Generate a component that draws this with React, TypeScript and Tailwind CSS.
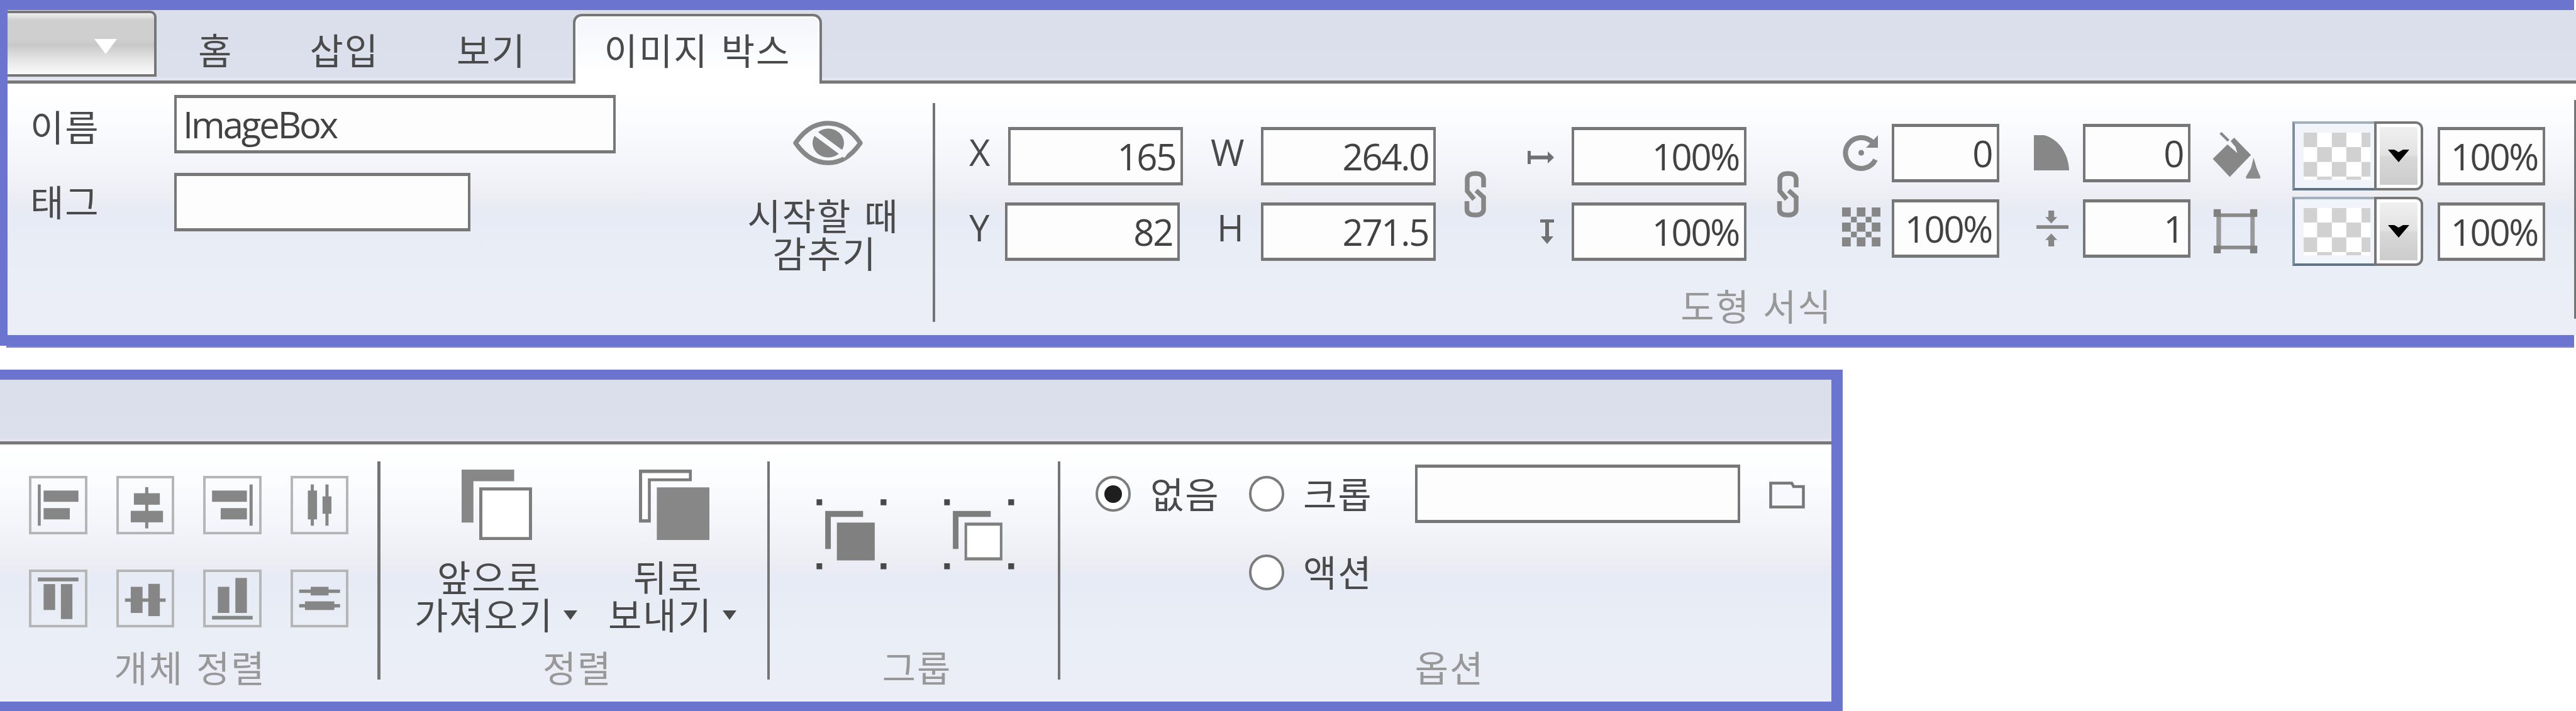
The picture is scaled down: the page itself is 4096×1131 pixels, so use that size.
import type { ReactNode } from "react";

const KR = "font-['Noto_Sans_CJK_KR',sans-serif] text-[58px] leading-[60px] tracking-[2px] [word-spacing:5px] whitespace-nowrap";
const LATIN = "font-['Open_Sans',sans-serif] text-[58px] leading-[60px] whitespace-nowrap";

function Label({ children, className = "" }: { children: ReactNode; className?: string }) {
  return <div className={`${KR} text-[#4a4a4a] ${className}`}>{children}</div>;
}

function Caption({ children, className = "" }: { children: ReactNode; className?: string }) {
  return <div className={`${KR} text-center text-[#989898] ${className}`}>{children}</div>;
}

function Field({ value, className = "", align = "justify-end pr-[8px] tracking-[-2.3px]" }: { value?: string; className?: string; align?: string }) {
  return (
    <div
      className={`flex h-[93px] shrink-0 items-center border-x-4 border-y-[5px] border-[#777] bg-[#fdfdfd] ${align} ${className}`}
    >
      <span className={`${LATIN} text-[#424242]`}>{value}</span>
    </div>
  );
}

function Divider({ className = "" }: { className?: string }) {
  return <div className={`w-1 shrink-0 bg-[#747474] ${className}`} />;
}

type R = [number, number, number, number];

function Glyph({ box, rects, className = "" }: { box: R; rects: R[]; className?: string }) {
  return (
    <svg viewBox={box.join(" ")} preserveAspectRatio="none" className={`block ${className}`}>
      {rects.map(([x1, y1, x2, y2], i) => (
        <rect key={i} x={x1} y={y1} width={x2 - x1} height={y2 - y1} fill="#868686" />
      ))}
    </svg>
  );
}

const alignIcons: { box: R; rects: R[] }[] = [
  { box: [110, 527, 222, 258], rects: [[144, 565, 155, 748], [166, 592, 299, 642], [166, 670, 266, 720]] },
  { box: [442, 527, 222, 258], rects: [[552, 577, 564, 760], [509, 604, 608, 655], [497, 682, 620, 733]] },
  { box: [773, 527, 222, 258], rects: [[807, 592, 940, 642], [840, 670, 940, 720], [950, 565, 962, 748]] },
  { box: [1105, 527, 222, 258], rects: [[1182, 565, 1194, 748], [1171, 592, 1206, 720], [1238, 565, 1250, 748], [1227, 618, 1261, 695]] },
  { box: [110, 940, 222, 256], rects: [[144, 975, 299, 992], [166, 1004, 210, 1118], [232, 1004, 276, 1158]] },
  { box: [442, 940, 222, 256], rects: [[475, 1067, 630, 1082], [497, 1016, 542, 1131], [564, 1003, 608, 1145]] },
  { box: [773, 940, 222, 256], rects: [[829, 1016, 873, 1131], [896, 977, 940, 1131], [807, 1144, 962, 1160]] },
  { box: [1105, 940, 222, 256], rects: [[1138, 1028, 1294, 1043], [1182, 1016, 1250, 1054], [1138, 1092, 1294, 1107], [1160, 1080, 1272, 1118]] },
];

function EyeIcon() {
  return (
    <svg viewBox="0 0 111 71" className="ml-[82px] mt-[59px] block h-[71px] w-[111px]" fill="none">
      <path d="M4 35.5C20 12 38 4 55.5 4S91 12 107 35.5C91 59 73 67 55.5 67S20 59 4 35.5Z" stroke="#878787" strokeWidth="7.5" strokeLinejoin="round" fill="#f7f8fb" />
      <ellipse cx="56" cy="35.5" rx="25" ry="23" fill="#878787" />
      <path d="M30 16 84 56" stroke="#f7f8fb" strokeWidth="8" />
    </svg>
  );
}

function LinkIcon({ className = "" }: { className?: string }) {
  return (
    <svg viewBox="0 0 35 74" className={`mt-[139px] block h-[74px] w-[35px] shrink-0 ${className}`} fill="none" stroke="#868686" strokeWidth="7.5">
      <path d="M31 26V13C31 7 26 4 18 4S5 7 5 13V32L16 45" />
      <path d="M4.5 48V61C4.5 67 9 70 17.5 70S31 67 31 61V42L19 31" />
    </svg>
  );
}

function RotateIcon() {
  return (
    <svg viewBox="0 0 56 56" className="mt-[82px] block h-14 w-14 overflow-visible" fill="none">
      <path d="M53 39A25 24.5 0 1 1 48 11" stroke="#878787" strokeWidth="8" />
      <path d="M57 0V20H38Z" fill="#878787" />
      <circle cx="30.5" cy="28" r="4.5" fill="#878787" />
    </svg>
  );
}

const opacityRects: R[] = [
  ...[127, 183, 240].flatMap((x) => [715, 801, 885].map((y): R => [x, y, x + 33, y + 52])),
  ...[161, 217].flatMap((x) => [768, 853].map((y): R => [x, y, x + 22, y + 32])),
];

const swatchRects: R[] = [
  [503, 583, 555, 646], [612, 583, 668, 646], [727, 583, 761, 646],
  [555, 646, 612, 711], [668, 646, 725, 711],
  [503, 711, 555, 775], [612, 711, 668, 775], [727, 711, 761, 775],
  [555, 775, 612, 789], [668, 775, 725, 789],
];

function Swatch({ className = "" }: { className?: string }) {
  return (
    <div className={`flex h-[110px] w-[208px] ${className}`}>
      <div className="w-[130px] border-b-4 border-l-4 border-t-4 border-b-[#5f7487] border-l-[#7c8fa0] border-t-[#a3afbb] bg-[#f1f4fa] pl-[14px] pt-[14px]">
        <svg viewBox="503 583 258 206" preserveAspectRatio="none" className="block h-[75px] w-[106px] bg-white">
          {swatchRects.map(([x1, y1, x2, y2], i) => (
            <rect key={i} x={x1} y={y1} width={x2 - x1} height={y2 - y1} fill="#d1d1d1" />
          ))}
        </svg>
      </div>
      <div className="flex w-[78px] rounded-r-[12px] border-4 border-[#777] bg-white p-[5px]">
        <div className="flex flex-1 items-center justify-center bg-[linear-gradient(#f0f0f0,#e2e2e2_48%,#d8d8d8_52%,#cccccc)]">
          <svg viewBox="833 657 82 56" preserveAspectRatio="none" className="h-5 w-[34px]">
            <path d="M833 657H857L874 668 891 657H915L874 713Z" fill="#000" />
          </svg>
        </div>
      </div>
    </div>
  );
}

function Radio({ checked = false, className = "" }: { checked?: boolean; className?: string }) {
  return (
    <div className={`flex h-[57px] w-14 shrink-0 items-center justify-center rounded-full border-[4px] border-[#7c7c7c] bg-white ${className}`}>
      {checked && <div className="h-[28px] w-[28px] rounded-full bg-[#1e1e1e]" />}
    </div>
  );
}

function Caret() {
  return (
    <svg viewBox="0 0 22 15" className="ml-[16px] mt-1 h-[15px] w-[22px]">
      <path d="M0 0H22L11 15Z" fill="#4a4a4a" />
    </svg>
  );
}

const bodyBg = "bg-[linear-gradient(#ffffff,#fcfdfe_12%,#f4f5fa_31%,#eeeff5_43%,#eaecf3_48%,#e7ebf5_52%,#e9edf6_70%,#ebeef6)]";
const stripBg = "bg-[linear-gradient(#dadeea,#dbdfeb_12%,#dce0ec_94%,#e6e9f5)]";

function TopPanel() {
  return (
    <section className="h-[553px] w-[4096px]">
      <div className="h-4 w-[4093px] bg-[#6b74ce]" />
      <div className="flex h-[517px]">
        <div className="w-3 shrink-0 bg-[#6b74ce]" />
        <div className="w-[4084px]">
          <div className={`flex h-[117px] border-b-[5px] border-[#797979] ${stripBg}`}>
            <div className="mt-px flex h-[105px] w-[237px] shrink-0 rounded-tr-[10px] border-b-4 border-r-4 border-t-4 border-[#777] bg-[linear-gradient(#eeeeee,#cfcfcf_12%,#cfcfcf_42%,#c8c8c8_52%,#e4e4e4_75%,#fafafa)]">
              <svg viewBox="0 0 36 24" className="ml-[138px] mt-[41px] h-6 w-9">
                <path d="M0 0H36L18 24Z" fill="#fff" />
              </svg>
            </div>
            <Label className="ml-[66px] mt-[32px]">홈</Label>
            <Label className="ml-[122px] mt-[32px]">삽입</Label>
            <Label className="ml-[123px] mt-[32px]">보기</Label>
            <div className="relative ml-auto mr-[2789px] mt-[6px] flex h-[111px] w-[396px] shrink-0 justify-center rounded-t-[14px] border-x-4 border-t-[4px] border-[#777] bg-[linear-gradient(#f3f5fb,#ffffff_85%)] shadow-[inset_0_0_0_3px_white]">
              <Label className="mt-[22px]">이미지 박스</Label>
            </div>
          </div>
          <div className={`flex h-[400px] ${bodyBg}`}>
            <div className="w-[967px] shrink-0 pt-[18px]">
              <div className="flex items-center">
                <Label className="w-[265px] pl-[36px] pt-1">이름</Label>
                <Field value="ImageBox" className="w-[702px]" align="pl-[10px] tracking-[-3.1px]" />
              </div>
              <div className="mt-[31px] flex items-center">
                <Label className="w-[265px] pb-[5px] pl-[36px]">태그</Label>
                <Field className="w-[471px]" />
              </div>
            </div>
            <div className="ml-[200px] w-[260px] shrink-0">
              <EyeIcon />
              <Label className="mt-[48px] text-center">시작할 때</Label>
              <Label className="pl-[5px] text-center">감추기</Label>
            </div>
            <Divider className="ml-[44px] mt-[31px] h-[348px]" />
            <div className="w-[2606px] shrink-0">
              <div className="flex h-[300px]">
                <div className="ml-[54px] w-[57px] shrink-0 pt-[79px]">
                  <div className={`${LATIN} text-[#4a4a4a]`}>X</div>
                  <div className={`${LATIN} mt-[60px] text-[#4a4a4a]`}>Y</div>
                </div>
                <div className="w-[283px] shrink-0 pt-[69px]">
                  <Field value="165" className="ml-[5px] w-[278px]" />
                  <Field value="82" className="mt-[27px] w-[278px]" />
                </div>
                <div className="w-[124px] shrink-0 pt-[79px]">
                  <div className={`${LATIN} pl-[44px] text-[#4a4a4a]`}>W</div>
                  <div className={`${LATIN} mt-[60px] pl-[54px] text-[#4a4a4a]`}>H</div>
                </div>
                <div className="w-[278px] shrink-0 pt-[69px]">
                  <Field value="264.0" />
                  <Field value="271.5" className="mt-[27px]" />
                </div>
                <LinkIcon className="ml-[45px]" />
                <div className="ml-[66px] w-[42px] shrink-0 pt-[107px]">
                  <svg viewBox="0 0 42 21" className="block h-[21px] w-[42px]">
                    <path d="M0 0H5V7.500H32V1L42 10.500 32 20V13.500H5V21H0Z" fill="#707070" />
                  </svg>
                  <svg viewBox="0 0 22 39" className="ml-[20px] mt-[88px] block h-[39px] w-[22px]">
                    <path d="M0 0H22V5H14V27H21L11 39 1 27H8V5H0Z" fill="#707070" />
                  </svg>
                </div>
                <div className="ml-[28px] w-[278px] shrink-0 pt-[69px]">
                  <Field value="100%" />
                  <Field value="100%" className="mt-[27px]" />
                </div>
                <LinkIcon className="ml-[48px]" />
                <div className="ml-[69px] w-[61px] shrink-0">
                  <RotateIcon />
                  <Glyph box={[127, 715, 146, 222]} rects={opacityRects} className="mt-[59px] h-[62px] w-[61px]" />
                </div>
                <div className="ml-[18px] w-[171px] shrink-0 pt-[64px]">
                  <Field value="0" />
                  <Field value="100%" className="mt-[27px]" />
                </div>
                <div className="ml-[55px] w-[56px] shrink-0 pt-[82px]">
                  <svg viewBox="0 0 56 56" className="block h-14 w-14">
                    <path d="M0 0H16C40 6 55 30 56 56H0Z" fill="#878787" />
                  </svg>
                  <svg viewBox="867 733 123 204" preserveAspectRatio="none" className="ml-1 mt-16 block h-[57px] w-[51px]">
                    <path d="M867 816H990V837H867ZM913 733H935V770H947L924 806 901 770H913ZM913 937H935V900H947L924 864 901 900H913Z" fill="#868686" />
                  </svg>
                </div>
                <div className="ml-[22px] w-[171px] shrink-0 pt-[64px]">
                  <Field value="0" />
                  <Field value="1" className="mt-[27px]" />
                </div>
                <div className="ml-[35px] w-[76px] shrink-0 pt-[77px]">
                  <svg viewBox="148 580 185 203" preserveAspectRatio="none" className="block h-[74px] w-[76px]">
                    <path d="M149 697 206 634 244 672 237 645 218 620 232 605 297 680 215 776Z" fill="#878787" />
                    <path d="M179 584 210 618" stroke="#878787" strokeWidth="11" />
                    <path d="M307 692 319 738 333 774V783H278V774L297 738Z" fill="#8c8c8c" />
                  </svg>
                  <svg viewBox="150 917 175 200" preserveAspectRatio="none" className="ml-px mt-[48px] block h-[72px] w-[71px]">
                    <path d="M163 940H181V1095H163ZM296 940H313V1095H296Z" fill="#999" />
                    <path d="M163 938H313V954H163ZM163 1080H313V1096H163Z" fill="#8a8a8a" />
                    <path d="M152 919H180V953H152ZM295 919H323V953H295ZM152 1080H180V1114H152ZM295 1080H323V1114H295Z" fill="#808080" />
                  </svg>
                </div>
                <div className="ml-[51px] w-[208px] shrink-0 pt-[60px]">
                  <Swatch />
                  <Swatch className="mt-[10px]" />
                </div>
                <div className="ml-[23px] w-[171px] shrink-0 pt-[69px]">
                  <Field value="100%" />
                  <Field value="100%" className="mt-[27px]" />
                </div>
              </div>
              <Caption className="mt-[22px] pl-[6px]">도형 서식</Caption>
            </div>
            <Divider className="mt-[26px] h-[348px]" />
          </div>
        </div>
      </div>
      <div className="h-[17px] w-[4093px] bg-[#6b74ce]" />
      <div className="ml-[10px] h-[3px] w-[4083px] bg-[#757edd]" />
    </section>
  );
}

function BottomPanel() {
  return (
    <section className="mt-[35px] h-[543px] w-[2930px] border-b-[15px] border-r-[18px] border-t-[16px] border-[#6b74ce]">
      <div className={`h-[103px] border-b-[5px] border-[#797979] ${stripBg}`} />
      <div className={`flex h-[409px] ${bodyBg}`}>
        <div className="w-[600px] shrink-0">
          <div className="h-[323px] pl-[46px] pt-[50px]">
            <div className="grid w-max grid-cols-4 gap-x-[46px] gap-y-[56px]">
              {alignIcons.map((icon, i) => (
                <div key={i} className="relative h-[92.5px] w-[92.5px]">
                  <Glyph {...icon} className="h-full w-full" />
                  <div className="absolute inset-0 border-[4.5px] border-[#b6b6b6]" />
                </div>
              ))}
            </div>
          </div>
          <Caption className="pl-[4px]">개체 정렬</Caption>
        </div>
        <Divider className="mt-[27px] h-[347px] w-[5px]" />
        <div className="w-[615px] shrink-0">
          <div className="flex h-[323px] pt-[40px]">
            <div className="ml-[54px] w-[260px] shrink-0">
              <svg viewBox="275 500 268 310" preserveAspectRatio="none" className="ml-[75px] block h-[112px] w-[112px]">
                <path d="M275 500H475V551H320V733H275Z" fill="#878787" />
                <path d="M342 578H543V810H342Z" fill="#7d7d7d" />
                <path d="M354 592H531V797H354Z" fill="#fff" />
              </svg>
              <Label className="ml-[36px] mt-[27px]">앞으로</Label>
              <div className="flex items-center">
                <Label>가져오기</Label>
                <Caret />
              </div>
            </div>
            <div className="ml-[48px] w-[220px] shrink-0">
              <svg viewBox="950 500 268 310" preserveAspectRatio="none" className="ml-[49px] block h-[112px] w-[112px]">
                <path d="M950 500H1151V551H995V733H950Z" fill="#7d7d7d" />
                <path d="M962 515H1140V539H984V719H962Z" fill="#fff" />
                <path d="M1018 578H1218V810H1018Z" fill="#878787" />
              </svg>
              <Label className="ml-[40px] mt-[27px]">뒤로</Label>
              <div className="flex items-center">
                <Label>보내기</Label>
                <Caret />
              </div>
            </div>
          </div>
          <Caption className="pl-[11px]">정렬</Caption>
        </div>
        <Divider className="mt-[27px] h-[347px]" />
        <div className="w-[458px] shrink-0">
          <div className="flex h-[323px] gap-[91.5px] pl-[74px] pt-[87px]">
            {[false, true].map((hollow) => (
              <svg key={String(hollow)} viewBox="260 365 300 400" preserveAspectRatio="none" className="block h-[112px] w-[111.5px]">
                <path d="M261 366H285V400H261ZM535 366H560V400H535ZM261 729H285V763H261ZM535 729H560V763H535Z" fill="#484848" />
                <path d="M298 432H460V466H322V648H298Z" fill="#7d7d7d" />
                <path d="M348 498H510V713H348Z" fill="#808080" />
                {hollow && <path d="M359 516H499V695H359Z" fill="#fff" />}
              </svg>
            ))}
          </div>
          <Caption className="pl-[10px]">그룹</Caption>
        </div>
        <Divider className="mt-[27px] h-[347px]" />
        <div className="flex-1">
          <div className="flex h-[323px]">
            <div className="flex h-[57px] items-center pl-[56px] mt-[50px] w-[300px] shrink-0">
              <Radio checked />
              <Label className="-mt-1 ml-[31px]">없음</Label>
            </div>
            <div className="mt-[50px] w-[264px] shrink-0">
              <div className="flex h-[57px] items-center">
                <Radio />
                <Label className="-mt-1 ml-[30px]">크롭</Label>
              </div>
              <div className="mt-[67.5px] flex h-[57px] items-center">
                <Radio />
                <Label className="-mt-1 ml-[30px]">액션</Label>
              </div>
            </div>
            <Field className="mt-[32px] w-[517px]" />
            <svg viewBox="0 0 57 43" className="ml-[46px] mt-[59px] block h-[43px] w-[57px] shrink-0">
              <path d="M2.5 2.5H36L39 8H54.5V40.5H2.5Z" fill="#f8f9fc" stroke="#777" strokeWidth="4.5" />
            </svg>
          </div>
          <Caption className="pl-[12px]">옵션</Caption>
        </div>
      </div>
    </section>
  );
}

export default function App() {
  return (
    <main className="h-[1131px] w-[4096px] overflow-hidden bg-white">
      <TopPanel />
      <BottomPanel />
    </main>
  );
}
